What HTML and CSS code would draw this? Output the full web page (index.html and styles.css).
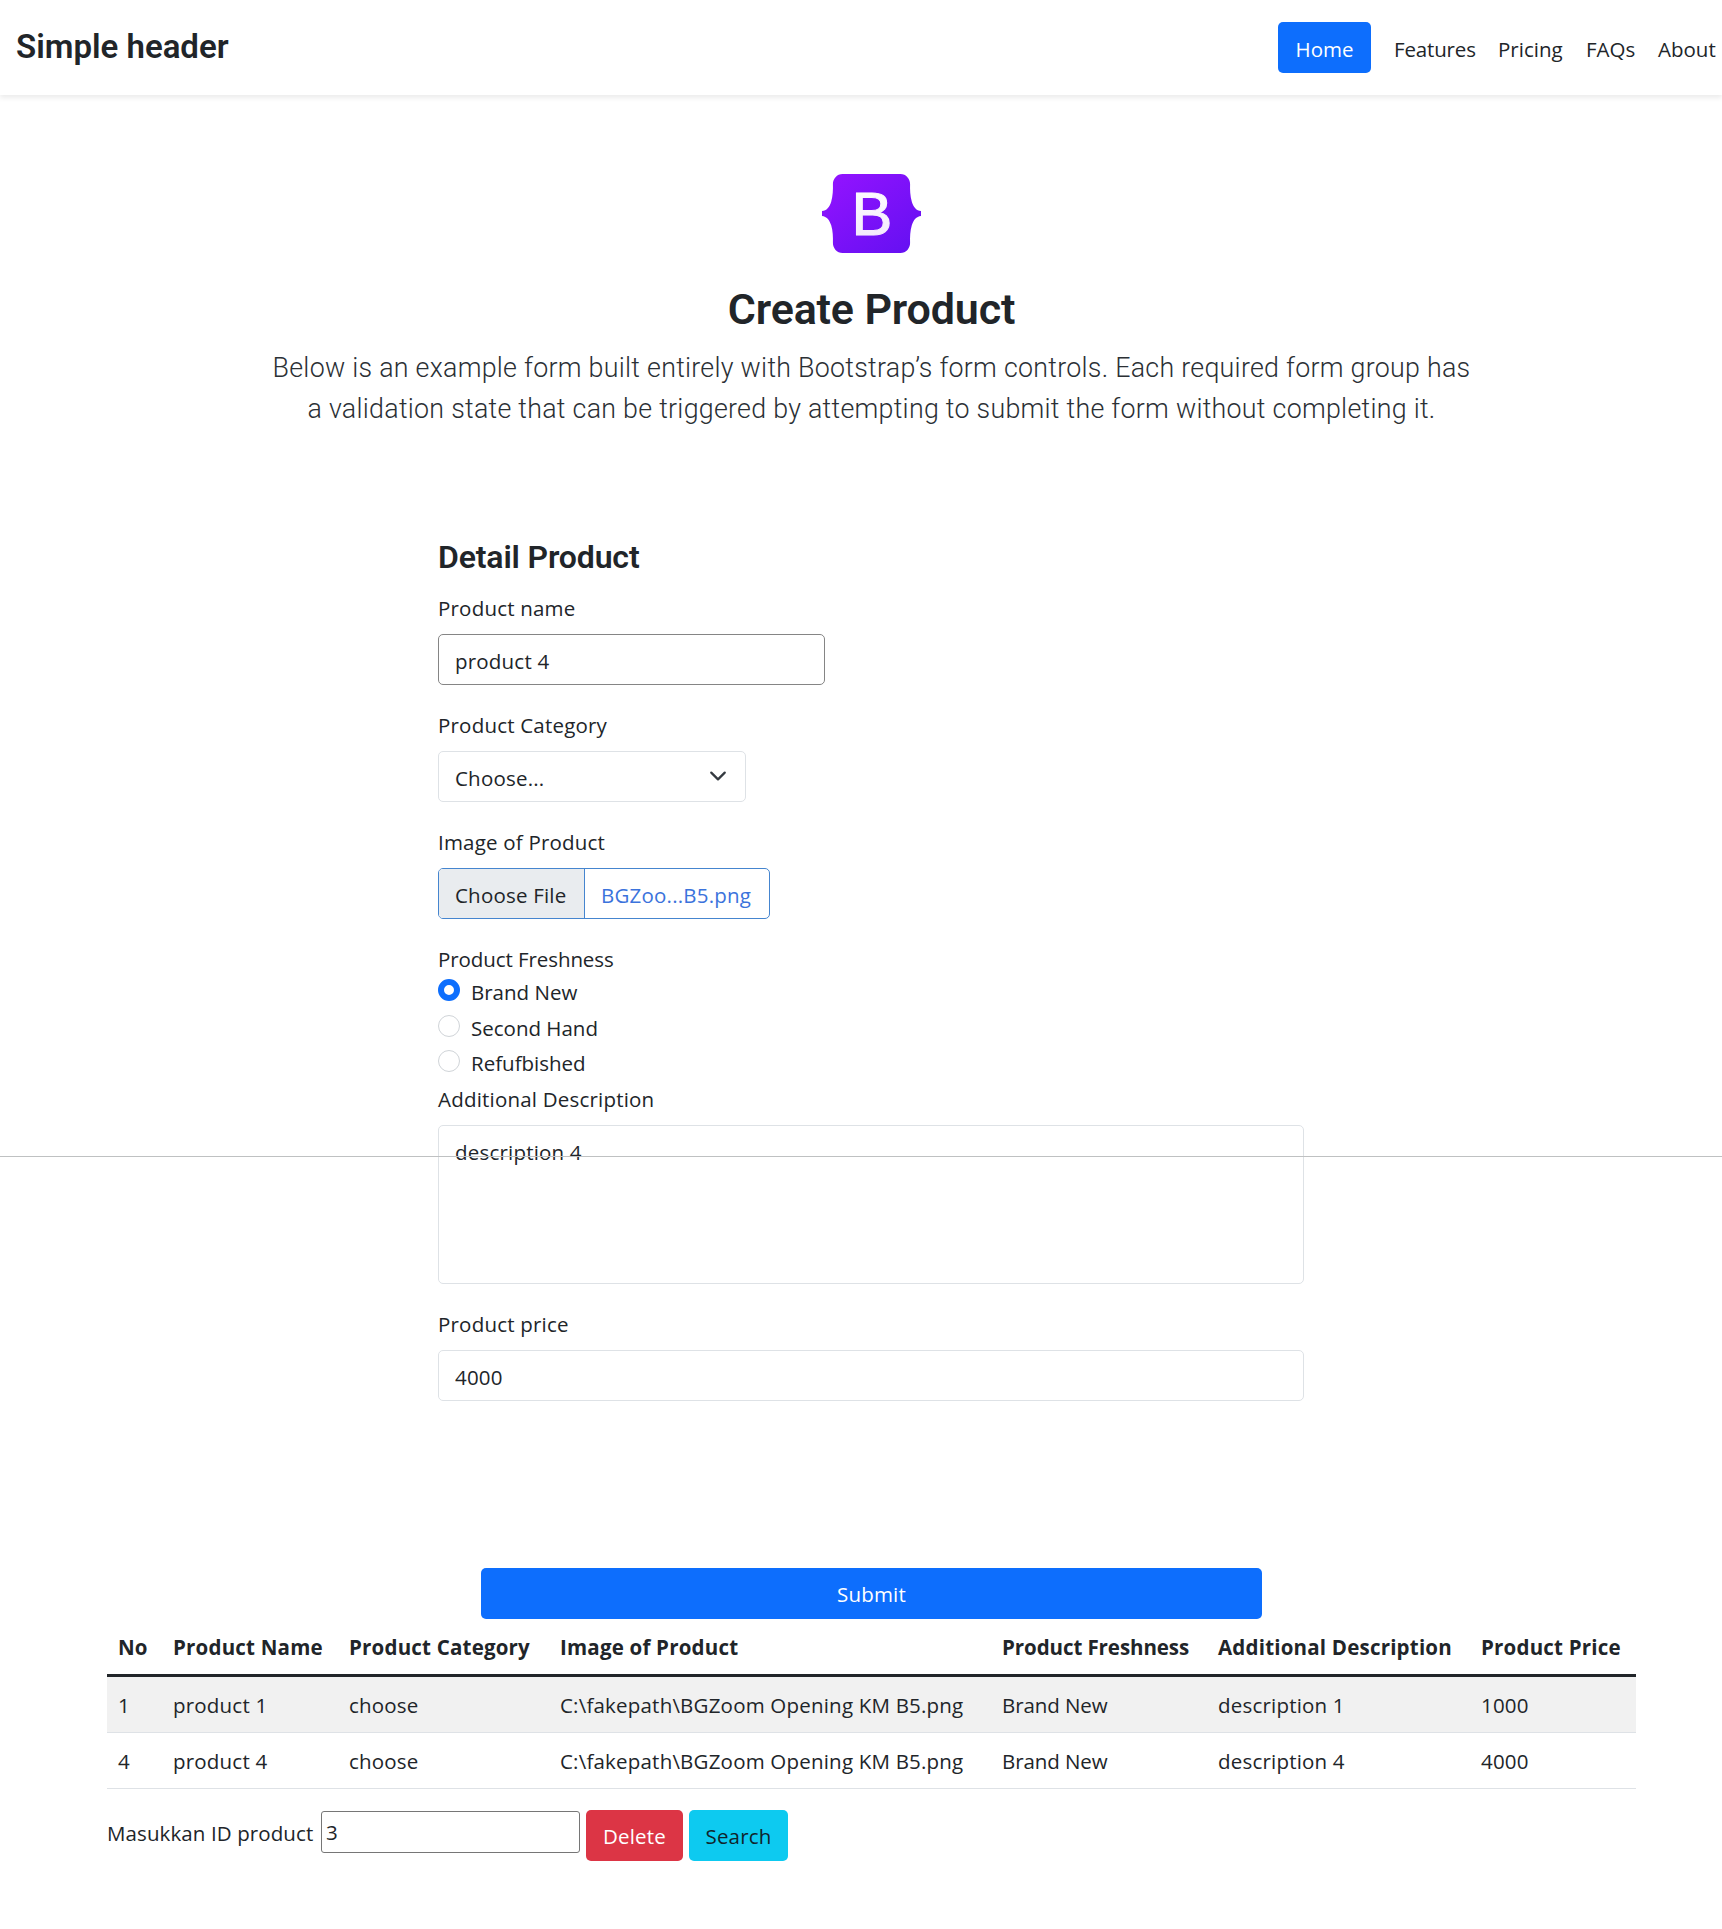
FILE: index.html
```html
<!DOCTYPE html>
<html lang="en">
<head>
<meta charset="utf-8">
<title>Create Product</title>
<link rel="stylesheet" href="styles.css">
</head>
<body>
<header class="site-header">
  <a class="brand">Simple header</a>
  <nav class="nav">
    <a class="nav-link active">Home</a>
    <a class="nav-link features">Features</a>
    <a class="nav-link pricing">Pricing</a>
    <a class="nav-link faqs">FAQs</a>
    <a class="nav-link about">About</a>
  </nav>
</header>

<main>
  <section class="intro">
    <svg class="logo" viewBox="0 0 118 94" aria-label="Bootstrap">
      <defs>
        <linearGradient id="plate" x1="0.1" y1="0.1" x2="0.9" y2="0.95">
          <stop offset="0" stop-color="#9013fe"/>
          <stop offset="1" stop-color="#6610f2"/>
        </linearGradient>
        <linearGradient id="mark" x1="0" y1="0" x2="0" y2="1">
          <stop offset="0" stop-color="#ffffff"/>
          <stop offset="1" stop-color="#f1e5fc"/>
        </linearGradient>
      </defs>
      <path fill="url(#plate)" d="M24.509 0c-6.733 0-11.715 5.893-11.492 12.284.214 6.14-.064 14.092-2.066 20.577C8.943 39.365 5.547 43.485 0 44.014v5.972c5.547.529 8.943 4.649 10.951 11.153 2.002 6.485 2.28 14.437 2.066 20.577C12.794 88.106 17.776 94 24.51 94H93.5c6.733 0 11.714-5.893 11.491-12.284-.214-6.14.064-14.092 2.066-20.577 2.009-6.504 5.396-10.624 10.943-11.153v-5.972c-5.547-.529-8.934-4.649-10.943-11.153-2.002-6.484-2.28-14.437-2.066-20.577C105.214 5.894 100.233 0 93.5 0H24.508z"/>
      <text class="logo-mark" x="35.2" y="72.2">B</text>
    </svg>
    <h1>Create Product</h1>
    <p class="lead">Below is an example form built entirely with Bootstrap’s form controls. Each required form group has<br>a validation state that can be triggered by attempting to submit the form without completing it.</p>
  </section>

  <form class="product-form">
    <h2>Detail Product</h2>
    <label class="label" for="name">Product name</label>
    <input class="control name" id="name" type="text" value="product 4">

    <label class="label">Product Category</label>
    <div class="control select">
      <span>Choose...</span>
      <svg class="chevron" viewBox="0 0 16 16"><path d="m2 5 6 6 6-6"/></svg>
    </div>

    <label class="label">Image of Product</label>
    <div class="control file">
      <span class="file-button">Choose File</span>
      <span class="file-name">BGZoo...B5.png</span>
    </div>

    <div class="label freshness">Product Freshness</div>
    <div class="radios">
      <div class="check"><i class="radio checked"></i><span>Brand New</span></div>
      <div class="check"><i class="radio"></i><span>Second Hand</span></div>
      <div class="check"><i class="radio"></i><span>Refufbished</span></div>
    </div>

    <label class="label description-label" for="description">Additional Description</label>
    <textarea class="control description" id="description">description 4</textarea>

    <label class="label" for="price">Product price</label>
    <input class="control price" id="price" type="text" value="4000">

    <button class="btn submit" type="button">Submit</button>
  </form>

  <section class="products">
    <table class="table">
      <colgroup><col class="c-no"><col class="c-name"><col class="c-category"><col class="c-image"><col class="c-fresh"><col class="c-desc"><col class="c-price"></colgroup>
      <thead>
        <tr><th>No</th><th>Product Name</th><th>Product Category</th><th>Image of Product</th><th class="tight">Product Freshness</th><th>Additional Description</th><th>Product Price</th></tr>
      </thead>
      <tbody>
        <tr class="striped"><td>1</td><td>product 1</td><td>choose</td><td>C:\fakepath\BGZoom Opening KM B5.png</td><td class="tight">Brand New</td><td>description 1</td><td>1000</td></tr>
        <tr><td>4</td><td>product 4</td><td>choose</td><td>C:\fakepath\BGZoom Opening KM B5.png</td><td class="tight">Brand New</td><td>description 4</td><td>4000</td></tr>
      </tbody>
    </table>
    <div class="lookup">
      <label class="lookup-label" for="pid">Masukkan ID product</label>
      <input class="lookup-input" id="pid" type="text" value="3">
      <button class="btn delete" type="button">Delete</button>
      <button class="btn search" type="button">Search</button>
    </div>
  </section>
</main>
<div class="page-rule"></div>
</body>
</html>
```

FILE: styles.css
```css
* { box-sizing: border-box; }

body {
  margin: 0;
  position: relative;
  height: 1929px;
  overflow: hidden;
  background: #fff;
  color: #212529;
  font: 400 20.5px/32px "Open Sans", "Noto Sans", sans-serif;
  letter-spacing: .2px;
}

input, textarea, button {
  font: inherit;
  letter-spacing: inherit;
  color: inherit;
}

/* Header */
.site-header {
  display: flex;
  justify-content: space-between;
  height: 95px;
  padding: 22px 6px 22px 16px;
  box-shadow: 0 3px 5px rgba(0, 0, 0, .08);
}
.brand {
  padding-top: 1px;
  font: 600 33px/48px Roboto, sans-serif;
  letter-spacing: 0;
}
.nav {
  display: flex;
  gap: 23px;
  letter-spacing: 0;
}
.nav-link {
  padding-top: 11px;
  height: 51px;
  white-space: nowrap;
}
.nav-link.active {
  width: 93px;
  border-radius: 5px;
  background: #0d6efd;
  color: #fff;
  text-align: center;
}
.features { width: 81px; letter-spacing: -.15px; }
.pricing { width: 65px; }
.faqs { width: 49px; }
.about { width: 58px; }

/* Intro */
.intro {
  display: flex;
  flex-direction: column;
  align-items: center;
  padding-top: 79px;
  padding-left: 21px;
  letter-spacing: 0;
  text-align: center;
}
.logo {
  width: 99px;
  height: 79px;
}
.logo-mark {
  font: 400 73px "Liberation Sans", Arial, sans-serif;
  fill: url(#mark);
  stroke: url(#mark);
  stroke-width: 1.3;
}
h1 {
  margin: 30px 0 0;
  font: 600 43px/52px Roboto, sans-serif;
  letter-spacing: -.15px;
}
.lead {
  margin: 13px 0 0;
  color: #2b3035;
  font: 300 26.8px/41px Roboto, sans-serif;
  letter-spacing: .27px;
  white-space: nowrap;
}

/* Form */
.product-form {
  width: 866px;
  margin: 108px 0 0 438px;
}
h2 {
  margin: 0 0 16px;
  font: 600 32px/38px Roboto, sans-serif;
  letter-spacing: -.15px;
}
.label {
  display: block;
  height: 42px;
}
.control {
  display: block;
  width: 100%;
  height: 51px;
  margin: 0 0 24px;
  padding: 10px 16px 7px;
  border: 1px solid #dee2e6;
  border-radius: 5px;
  background: #fff;
  outline: 0;
}
.name {
  width: 387px;
  border-color: #858585;
}
.select {
  display: flex;
  justify-content: space-between;
  width: 308px;
}
.chevron {
  width: 18px;
  height: 18px;
  margin: 5px 2px 0 0;
  fill: none;
  stroke: #343a40;
  stroke-width: 2;
  stroke-linecap: round;
  stroke-linejoin: round;
}
.file {
  display: flex;
  width: 332px;
  padding: 0;
  overflow: hidden;
  border-color: #4585cf;
}
.file-button {
  width: 146px;
  padding: 10px 0 0 16px;
  border-right: 1px solid #4585cf;
  background: #e9ecef;
}
.file-name {
  padding: 10px 0 0 16px;
  color: #3b73dc;
}
.freshness {
  height: 33px;
  letter-spacing: -.08px;
}
.check {
  display: flex;
  gap: 11px;
  height: 35.6px;
  letter-spacing: 0;
}
.radio {
  width: 22px;
  height: 22px;
  margin-top: 3px;
  border: 1px solid #d0d4d8;
  border-radius: 50%;
}
.radio.checked { border: 6px solid #0d6efd; }
.description {
  height: 159px;
  resize: none;
  overflow: hidden;
}
.btn {
  height: 51px;
  padding: 2px 0 0;
  border: 0;
  border-radius: 5px;
  background: #0d6efd;
  color: #fff;
  text-align: center;
}
.submit {
  display: block;
  width: 781px;
  margin: 167.2px 0 0 43px;
}

/* Products table */
.products {
  width: 1529px;
  margin-left: 107px;
}
.table {
  width: 100%;
  table-layout: fixed;
  border-collapse: separate;
  border-spacing: 0;
  white-space: nowrap;
}
.c-no { width: 55px; }
.c-name { width: 176px; }
.c-category { width: 211px; }
.c-image { width: 442px; }
.c-fresh { width: 216px; }
.c-desc { width: 263px; }
.c-price { width: 166px; }
th, td {
  height: 56px;
  padding: 12px 0 11px 11px;
  border-bottom: 1px solid #dee2e6;
  text-align: left;
}
th {
  height: 57px;
  border-bottom: 3px solid #212529;
}
.striped td { background: #f1f1f1; }
.tight { letter-spacing: -.08px; }

.lookup {
  display: flex;
  align-items: flex-start;
  padding-top: 21px;
}
.lookup-label {
  width: 214px;
  padding-top: 7px;
  letter-spacing: .1px;
  white-space: nowrap;
}
.lookup-input {
  width: 259px;
  height: 42px;
  margin: 1px 6px 0 0;
  padding: 1px 4px 0;
  border: 1px solid #767676;
  border-radius: 3px;
}
.delete {
  width: 97px;
  margin-right: 6px;
  background: #dc3545;
}
.search {
  width: 99px;
  background: #0dcaf0;
  color: #10242b;
}

/* Divider drawn across the whole page, over the form */
.page-rule {
  position: absolute;
  top: 1156px;
  left: 0;
  width: 100%;
  height: 1px;
  background: #bfc1c2;
}
```
